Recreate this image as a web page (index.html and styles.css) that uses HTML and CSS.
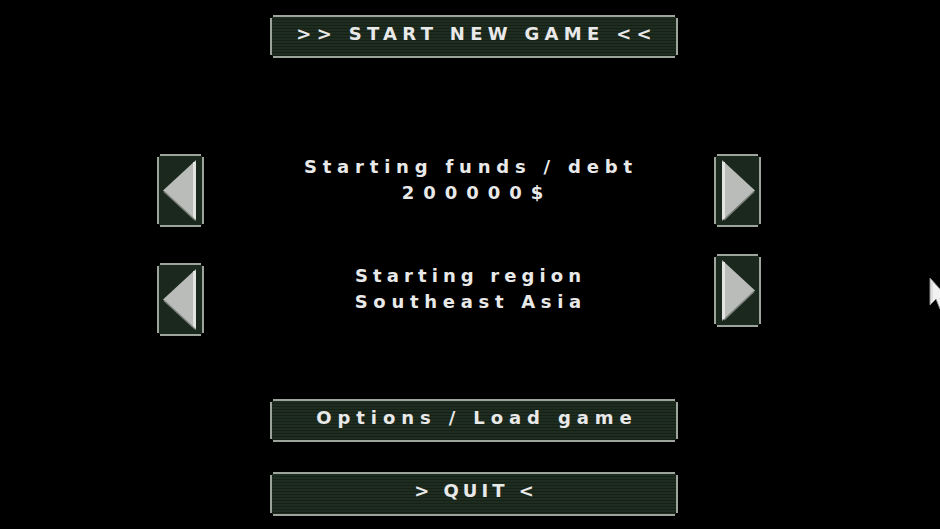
FILE: index.html
```html
<!DOCTYPE html>
<html lang="en">
<head>
<meta charset="utf-8">
<title>New Game</title>
<link rel="stylesheet" href="styles.css">
</head>
<body>
<main class="screen">
  <div class="top">
    <button class="btn btn-start">&gt;&gt; START NEW GAME &lt;&lt;</button>
  </div>

  <section class="settings">
    <div class="setting setting-funds">
      <button class="arrow" aria-label="Previous">
        <svg width="47" height="73" viewBox="0 0 47 73">
          <rect x="2" y="2" width="43" height="69" fill="#1b281d"/>
          <rect x="3" y="0" width="41" height="2" fill="#9ca49c"/>
          <rect x="3" y="71" width="41" height="2" fill="#9ca49c"/>
          <rect x="0" y="3" width="2" height="67" fill="#9ca49c"/>
          <rect x="45" y="3" width="2" height="67" fill="#9ca49c"/>
          <polygon points="6,36.5 39,6 39,67" fill="#b9bcb9"/>
          <rect x="36" y="8" width="3" height="57" fill="#e2e4e2"/>
          <polyline points="7,37.5 38,66" fill="none" stroke="#7d817d" stroke-width="1.5"/>
        </svg>
      </button>
      <div class="value">
        <p class="label label-funds">Starting funds / debt</p>
        <p class="label label-num">200000$</p>
      </div>
      <button class="arrow" aria-label="Next">
        <svg width="47" height="73" viewBox="0 0 47 73">
          <rect x="2" y="2" width="43" height="69" fill="#1b281d"/>
          <rect x="3" y="0" width="41" height="2" fill="#9ca49c"/>
          <rect x="3" y="71" width="41" height="2" fill="#9ca49c"/>
          <rect x="0" y="3" width="2" height="67" fill="#9ca49c"/>
          <rect x="45" y="3" width="2" height="67" fill="#9ca49c"/>
          <polygon points="8,6 41,36.5 8,67" fill="#b9bcb9"/>
          <rect x="8" y="8" width="3" height="57" fill="#e2e4e2"/>
          <polyline points="40,37.5 10,66" fill="none" stroke="#7d817d" stroke-width="1.5"/>
        </svg>
      </button>
    </div>

    <div class="setting setting-region">
      <button class="arrow arrow-low" aria-label="Previous">
        <svg width="47" height="73" viewBox="0 0 47 73">
          <rect x="2" y="2" width="43" height="69" fill="#1b281d"/>
          <rect x="3" y="0" width="41" height="2" fill="#9ca49c"/>
          <rect x="3" y="71" width="41" height="2" fill="#9ca49c"/>
          <rect x="0" y="3" width="2" height="67" fill="#9ca49c"/>
          <rect x="45" y="3" width="2" height="67" fill="#9ca49c"/>
          <polygon points="6,36.5 39,6 39,67" fill="#b9bcb9"/>
          <rect x="36" y="8" width="3" height="57" fill="#e2e4e2"/>
          <polyline points="7,37.5 38,66" fill="none" stroke="#7d817d" stroke-width="1.5"/>
        </svg>
      </button>
      <div class="value value-low">
        <p class="label label-region">Starting region</p>
        <p class="label label-wide">Southeast Asia</p>
      </div>
      <button class="arrow arrow-high" aria-label="Next">
        <svg width="47" height="73" viewBox="0 0 47 73">
          <rect x="2" y="2" width="43" height="69" fill="#1b281d"/>
          <rect x="3" y="0" width="41" height="2" fill="#9ca49c"/>
          <rect x="3" y="71" width="41" height="2" fill="#9ca49c"/>
          <rect x="0" y="3" width="2" height="67" fill="#9ca49c"/>
          <rect x="45" y="3" width="2" height="67" fill="#9ca49c"/>
          <polygon points="8,6 41,36.5 8,67" fill="#b9bcb9"/>
          <rect x="8" y="8" width="3" height="57" fill="#e2e4e2"/>
          <polyline points="40,37.5 10,66" fill="none" stroke="#7d817d" stroke-width="1.5"/>
        </svg>
      </button>
    </div>
  </section>

  <div class="bottom">
    <button class="btn btn-options">Options / Load game</button>
    <button class="btn btn-quit">&gt; QUIT &lt;</button>
  </div>

  <svg class="pointer" width="20" height="34" viewBox="0 0 20 34">
    <path d="M1 1 L1 28 L7 22 L11 32 L15 30 L11 21 L19 21 Z" fill="#f2f2f2" stroke="#8a8a8a" stroke-width="1"/>
    <path d="M3 5 L3 24" stroke="#cfcfcf" stroke-width="1"/>
  </svg>
</main>
</body>
</html>
```

FILE: styles.css
```css
html, body {
  margin: 0;
  padding: 0;
  background: #000;
}

body {
  width: 940px;
  height: 529px;
  overflow: hidden;
  font-family: "DejaVu Sans", "Liberation Sans", sans-serif;
  font-weight: bold;
  color: #e9e9e9;
}

.screen {
  position: relative;
  width: 940px;
  height: 529px;
  display: flex;
  flex-direction: column;
}

/* wide framed buttons: gray edge bars with cut corners over a scanlined green fill */
.btn {
  display: block;
  width: 408px;
  height: 43px;
  padding: 0 0 6px;
  border: 0;
  font: inherit;
  font-size: 18px;
  line-height: 37px;
  color: #e9e9e9;
  text-align: center;
  background:
    linear-gradient(#9ca49c, #9ca49c) 3px 0 / calc(100% - 6px) 2px no-repeat,
    linear-gradient(#9ca49c, #9ca49c) 3px 100% / calc(100% - 6px) 2px no-repeat,
    linear-gradient(#9ca49c, #9ca49c) 0 3px / 2px calc(100% - 6px) no-repeat,
    linear-gradient(#9ca49c, #9ca49c) 100% 3px / 2px calc(100% - 6px) no-repeat,
    repeating-linear-gradient(to bottom, #1f2d21 0 2px, #152017 2px 3px) 2px 2px / calc(100% - 4px) calc(100% - 4px) no-repeat;
}

.top {
  display: flex;
  justify-content: center;
  padding: 15px 0 0 8px;
}

.btn-start {
  letter-spacing: 5.3px;
  text-indent: 5.3px;
}

.btn-options {
  letter-spacing: 5.9px;
  text-indent: 5.9px;
}

.btn-quit {
  height: 44px;
  line-height: 38px;
  letter-spacing: 4px;
  text-indent: 4px;
}

.settings {
  display: flex;
  flex-direction: column;
  gap: 27px;
  margin-top: 96px;
}

.setting {
  display: flex;
  justify-content: center;
  align-items: flex-start;
  padding-right: 22px;
}

.setting-funds {
  height: 73px;
}

.setting-region {
  height: 82px;
}

.arrow {
  display: block;
  width: 47px;
  height: 73px;
  padding: 0;
  border: 0;
  background: none;
}

.arrow svg {
  display: block;
}

.arrow-low {
  align-self: flex-end;
}

.arrow-high {
  align-self: flex-start;
}

.value {
  width: 510px;
  padding-left: 18px;
  box-sizing: border-box;
  text-align: center;
}

.value-low {
  margin-top: 9px;
}

.label {
  margin: 0;
  font-size: 18px;
  line-height: 26px;
}

.label-funds {
  letter-spacing: 5.8px;
  text-indent: 5.8px;
}

.label-region {
  letter-spacing: 5.1px;
  text-indent: 5.1px;
}

.label-wide {
  letter-spacing: 5.7px;
  text-indent: 5.7px;
}

.label-num {
  letter-spacing: 9px;
  text-indent: 18px;
}

.bottom {
  display: flex;
  flex-direction: column;
  align-items: center;
  gap: 30px;
  padding-left: 8px;
  margin-top: 63px;
}

/* mouse pointer sitting at the right edge of the screen */
.pointer {
  position: absolute;
  left: 929px;
  top: 277px;
}
```
